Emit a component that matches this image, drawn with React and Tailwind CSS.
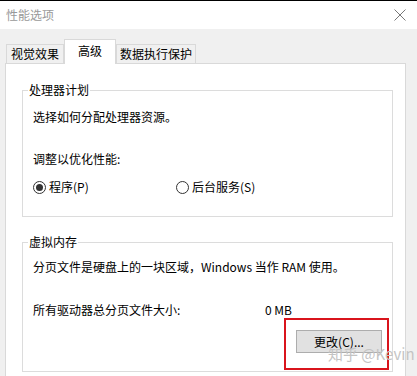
import { useState } from 'react'

const FONT = { fontFamily: '"Noto Sans CJK SC", "Microsoft YaHei", sans-serif' }

function Radio({ checked, label, onClick, className = '' }) {
  return (
    <div className={`flex items-center cursor-default ${className}`} onClick={onClick}>
      <span
        className={`w-[13px] h-[13px] rounded-full border flex items-center justify-center bg-white ${
          checked ? 'border-[#333333]' : 'border-[#333333]'
        }`}
      >
        {checked && <span className="w-[7px] h-[7px] rounded-full bg-[#333333]" />}
      </span>
      <span className="ml-[3px]">{label}</span>
    </div>
  )
}

function Group({ title, className = '', children }) {
  return (
    <fieldset className={`border border-[#dcdcdc] ml-[16px] w-[371px] ${className}`}>
      <legend className="ml-[5px] px-[1px] leading-[16px]">{title}</legend>
      <div className="px-[10px]">{children}</div>
    </fieldset>
  )
}

export default function App() {
  const [tab, setTab] = useState('高级')
  const [mode, setMode] = useState('program')
  const tabs = [
    { name: '视觉效果', w: 'w-[58px]' },
    { name: '高级', w: 'w-[52px]' },
    { name: '数据执行保护', w: 'w-[80px]' },
  ]

  return (
    <div
      className="w-[417px] h-[376px] bg-[#f0f0f0] overflow-hidden relative flex flex-col text-[12px] text-black"
      style={FONT}
    >
      {/* title bar */}
      <div className="h-[29px] bg-white border-t border-black flex items-center justify-between pl-[6px] pr-[11px]">
        <span className="text-[#999999] leading-[16px]">性能选项</span>
        <svg width="12" height="12" viewBox="0 0 12 12" className="stroke-[#777777]">
          <path d="M0.5 0.5 L11.5 11.5 M11.5 0.5 L0.5 11.5" strokeWidth="1" fill="none" />
        </svg>
      </div>

      {/* tabs */}
      <div className="h-[34px] flex items-end pl-[6px] shrink-0">
        {tabs.map(t =>
          t.name === tab ? (
            <div
              key={t.name}
              className={`${t.w} h-[25px] -mb-px relative z-10 bg-white border-x border-t border-[#d9d9d9] flex items-start justify-center pt-[3px] leading-[16px]`}
            >
              {t.name}
            </div>
          ) : (
            <div
              key={t.name}
              onClick={() => setTab(t.name)}
              className={`${t.w} h-[19px] bg-[#f0f0f0] border-x border-t border-[#d9d9d9] flex items-center justify-center leading-[16px]`}
            >
              {t.name}
            </div>
          )
        )}
      </div>

      {/* panel */}
      <div className="mx-[5px] w-[401px] flex-1 bg-white border border-[#d9d9d9] border-b-0">
        <Group title="处理器计划" className="mt-[18px]">
          <div className="pt-[11px] leading-[16px]">选择如何分配处理器资源。</div>
          <div className="mt-[26px] leading-[16px]">调整以优化性能:</div>
          <div className="mt-[12px] flex leading-[16px] pb-[21px]">
            <Radio
              className="w-[143px]"
              checked={mode === 'program'}
              label="程序(P)"
              onClick={() => setMode('program')}
            />
            <Radio checked={mode === 'service'} label="后台服务(S)" onClick={() => setMode('service')} />
          </div>
        </Group>

        <Group title="虚拟内存" className="mt-[17px]">
          <div className="pt-[9px] leading-[16px]">分页文件是硬盘上的一块区域，Windows 当作 RAM 使用。</div>
          <div className="mt-[27px] flex leading-[16px]">
            <span className="w-[232px]">所有驱动器总分页文件大小:</span>
            <span>0 MB</span>
          </div>
          <div className="mt-[12px] pb-[18px] flex justify-end">
            <button className="w-[86px] h-[23px] bg-[#e1e1e1] border border-[#adadad] leading-[16px]">
              更改(C)...
            </button>
          </div>
        </Group>
      </div>

      {/* annotation overlay */}
      <div className="absolute left-[284px] top-[318px] w-[105px] h-[52px] border-2 border-[#d9141c] pointer-events-none" />
      <div className="absolute left-[328px] top-[345px] text-[15px] leading-[18px] text-[#c4c4c4] pointer-events-none whitespace-nowrap">
        知乎 @Kevin
      </div>
    </div>
  )
}
